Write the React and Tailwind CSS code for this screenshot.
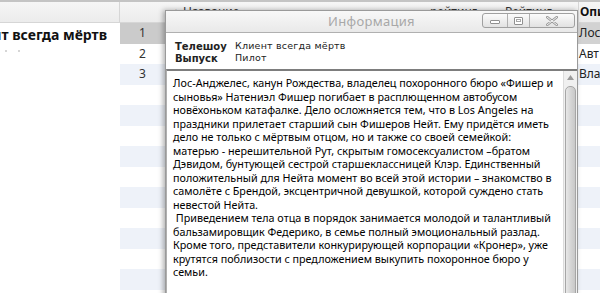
import React from "react";

const lines = [
  "Лос-Анджелес, канун Рождества, владелец похоронного бюро «Фишер и",
  "сыновья» Натениэл Фишер погибает в расплющенном автобусом",
  "новёхоньком катафалке. Дело осложняется тем, что в Los Angeles на",
  "праздники прилетает старший сын Фишеров Нейт. Ему придётся иметь",
  "дело не только с мёртвым отцом, но и также со своей семейкой:",
  "матерью - нерешительной Рут, скрытым гомосексуалистом –братом",
  "Дэвидом, бунтующей сестрой старшеклассницей Клэр. Единственный",
  "положительный для Нейта момент во всей этой истории – знакомство в",
  "самолёте с Брендой, эксцентричной девушкой, которой суждено стать",
  "невестой Нейта.",
  " Приведением тела отца в порядок занимается молодой и талантливый",
  "бальзамировщик Федерико, в семье полный эмоциональный разлад.",
  "Кроме того, представители конкурирующей корпорации «Кронер», уже",
  "крутятся поблизости с предложением выкупить похоронное бюро у",
  "семьи.",
];

const rows = Array.from({ length: 14 }, (_, i) => i);
const right = ["Лос", "Авт", "Вла"];

export default function App() {
  return (
    <div className="relative w-[600px] h-[293px] overflow-hidden bg-white" style={{ fontFamily: '"Noto Sans", "Open Sans", sans-serif' }}>
      {/* header row */}
      <div className="flex h-[23px] border-t-2 border-[#c4c4c4] border-b border-b-[#d6d6d6] bg-gradient-to-b from-[#f6f6f6] to-[#ececec] text-[12px] text-[#333]">
        <div className="w-[120px] border-r border-[#d6d6d6]"></div>
        <div className="w-[45px]"></div>
        <div className="flex-1 relative">
          <span className="absolute left-[7px] top-[3px] text-[8px] text-[#666]">▲</span>
          <span className="absolute left-[18px] top-[1px]">Название</span>
          <span className="absolute left-[265px] top-[1px]">рейтинг</span>
          <span className="absolute left-[340px] top-[1px]">Рейтинг</span>
        </div>
        <div className="w-[22px] border-l border-[#d6d6d6] pl-[1px] pt-[1px] font-bold text-[#111] overflow-hidden whitespace-nowrap">Описание</div>
      </div>

      {/* body */}
      <div className="flex">
        <div className="w-[120px] overflow-hidden">
          <div className="flex justify-end pr-[13px] pt-[1px] h-[22px] items-center whitespace-nowrap text-[14px] font-bold text-[#111]">
            Клиент всегда мёртв
          </div>
          <div className="flex gap-[11px] pl-[5px] pt-[5px]">
            <div className="w-[2px] h-[2px] rounded-full bg-[#c8c8c8]"></div>
            <div className="w-[2px] h-[2px] rounded-full bg-[#c8c8c8]"></div>
          </div>
        </div>
        <div className="w-[45px] flex flex-col">
          {rows.map((i) => (
            <div
              key={i}
              className={
                "h-[20.5px] flex items-center justify-center text-[12px] text-[#333] " +
                (i === 0 ? "bg-[#cbcbcb]" : i % 2 === 0 ? "bg-[#eef2f9]" : "bg-white")
              }
            >
              {i < 3 ? i + 1 : ""}
            </div>
          ))}
        </div>
        <div className="flex-1 flex flex-col">
          {rows.map((i) => (
            <div key={i} className={"h-[20.5px] " + (i === 0 ? "bg-[#cbcbcb]" : i % 2 === 0 ? "bg-[#eef2f9]" : "bg-white")}></div>
          ))}
        </div>
        <div className="w-[22px] flex flex-col">
          {rows.map((i) => (
            <div
              key={i}
              className={
                "h-[20.5px] flex items-center pl-[1px] text-[12px] text-[#222] whitespace-nowrap overflow-hidden " +
                (i === 0 ? "bg-[#d2d2d2]" : i % 2 === 0 ? "bg-[#eef2f9]" : "bg-white")
              }
            >
              {right[i] || ""}
            </div>
          ))}
        </div>
      </div>

      {/* dialog */}
      <div className="absolute left-[165px] top-[10px] w-[413px] h-[300px] bg-white border border-[#9a9a9a] shadow-[-2px_0_5px_rgba(0,0,0,0.3)] flex flex-col">
        <div className="relative h-[22px] shrink-0 flex items-center justify-center bg-gradient-to-b from-[#f8f8f8] to-[#e9e9e9] border-b border-[#b0b0b0]">
          <span className="text-[13px] text-[#a8a8a8] tracking-[0.3px]">Информация</span>
          <div className="absolute right-[2px] top-[2px] flex h-[15px] border border-[#a0a0a0] rounded-[3px] bg-gradient-to-b from-[#fbfbfb] to-[#e2e2e2] overflow-hidden">
            <div className="w-[25px] flex items-end justify-center pb-[3px] border-r border-[#b0b0b0]">
              <div className="w-[10px] h-[4px] border border-[#909090] rounded-[1px] bg-white"></div>
            </div>
            <div className="w-[22px] flex items-center justify-center border-r border-[#b0b0b0]">
              <div className="w-[9px] h-[8px] border border-[#909090] rounded-[1px] bg-white flex items-center justify-center">
                <div className="w-[5px] h-[3px] border border-[#a8a8a8]"></div>
              </div>
            </div>
            <div className="w-[44px] flex items-center justify-center">
              <svg width="12" height="10" viewBox="0 0 12 10">
                <path d="M1 1 L11 9 M11 1 L1 9" stroke="#9a9a9a" strokeWidth="2.6" strokeLinecap="round" />
                <path d="M1 1 L11 9 M11 1 L1 9" stroke="#f4f4f4" strokeWidth="1" strokeLinecap="round" />
              </svg>
            </div>
          </div>
        </div>

        <div className="h-[36px] shrink-0 pl-[9px] pt-[7px] text-[#222]">
          <div className="flex h-[12px] items-center">
            <span className="w-[60px] font-bold" style={{ fontFamily: '"DejaVu Sans", sans-serif', fontSize: "10px" }}>Телешоу</span>
            <span className="text-[9.5px] tracking-[0.2px]" style={{ fontFamily: '"DejaVu Sans", sans-serif' }}>Клиент всегда мёртв</span>
          </div>
          <div className="flex h-[12px] items-center">
            <span className="w-[60px] font-bold" style={{ fontFamily: '"DejaVu Sans", sans-serif', fontSize: "10px" }}>Выпуск</span>
            <span className="text-[9.5px] tracking-[0.2px]" style={{ fontFamily: '"DejaVu Sans", sans-serif' }}>Пилот</span>
          </div>
        </div>

        <div className="flex-1 flex border-t-2 border-[#7d7d7d] border-l border-l-[#b0b0b0]">
          <div className="flex-1 pl-[6px] pt-[6px] text-[10.75px] leading-[13.5px] text-black">
            {lines.map((l, i) => (
              <div key={i} className="whitespace-pre">{l}</div>
            ))}
          </div>
          <div className="w-[14px] bg-[#f0f0f0] border-l border-[#dcdcdc] flex flex-col items-center pt-[4px]">
            <svg width="7" height="5" viewBox="0 0 7 5">
              <path d="M0 5 L3.5 0 L7 5 Z" fill="#9a9a9a" />
            </svg>
            <div className="mt-[6px] w-[11px] flex-1 rounded-t-[5px] border border-[#a6a6a6] bg-gradient-to-r from-[#e8e8e8] via-[#d6d6d6] to-[#c8c8c8]"></div>
          </div>
        </div>
      </div>
    </div>
  );
}
